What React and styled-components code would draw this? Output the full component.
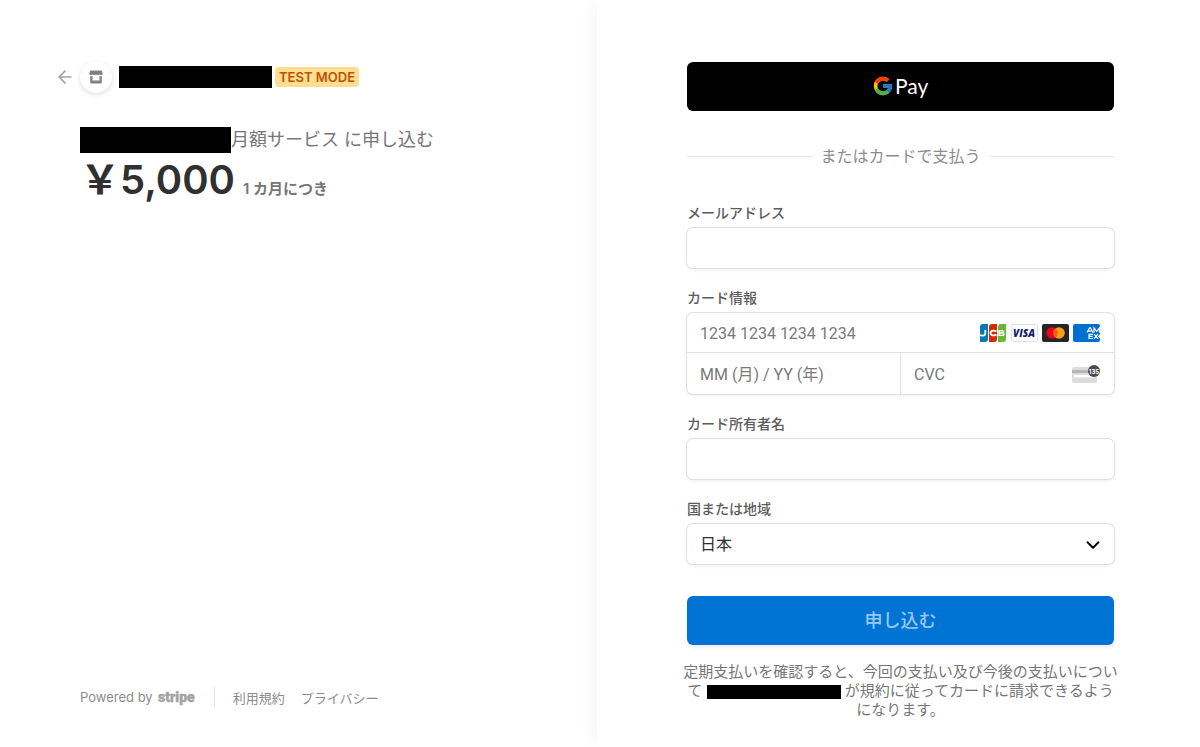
import styled, { createGlobalStyle } from "styled-components";
import { FcGoogle } from "react-icons/fc";
import { ArrowLeft, ChevronDown } from "lucide-react";

const GlobalStyle = createGlobalStyle`
    * {
        box-sizing: border-box;
    }
    body {
        margin: 0;
        background: #ffffff;
        color: #1a1a1a;
        font-family: Inter, "Noto Sans CJK JP", sans-serif;
        -webkit-font-smoothing: antialiased;
    }
    input, select, button {
        font-family: inherit;
    }
`;

const Page = styled.div`
    display: grid;
    grid-template-columns: minmax(0, 597fr) minmax(0, 603fr);
    min-height: 100vh;
`;

const Overview = styled.section`
    display: flex;
    flex-direction: column;
    justify-content: space-between;
    padding: 61px 90px 39px 80px;
`;

const Payment = styled.main`
    padding: 62px 86px 27px 90px;
    box-shadow: -8px 0 16px -4px rgba(0, 0, 0, 0.04);
`;

const Header = styled.header`
    display: flex;
    align-items: center;
    margin-left: -25px;
    height: 32px;
`;

const BackLink = styled.a`
    display: flex;
    width: 25px;
    color: #a3a3a3;
`;

const StoreBadge = styled.div`
    display: flex;
    align-items: center;
    justify-content: center;
    width: 32px;
    height: 32px;
    margin-right: 7px;
    border-radius: 50%;
    background: #ffffff;
    box-shadow: 0 2px 5px rgba(0, 0, 0, 0.12), 0 0 2px rgba(0, 0, 0, 0.04);
`;

const Redacted = styled.span`
    display: inline-block;
    flex: none;
    width: ${(props) => props.$width}px;
    height: ${(props) => props.$height}px;
    background: #000000;
    vertical-align: middle;
`;

const TestMode = styled.span`
    height: 20px;
    margin-left: 3px;
    padding: 0 4px;
    border-radius: 4px;
    background: #ffde92;
    color: #bb5504;
    font-size: 13px;
    font-weight: 600;
    line-height: 20px;
    white-space: nowrap;
`;

const Title = styled.h1`
    display: flex;
    align-items: center;
    height: 26px;
    margin: 34px 0 0;
    color: #767676;
    font-size: 18px;
    font-weight: 400;
    line-height: 26px;
    white-space: nowrap;
`;

const Price = styled.div`
    display: flex;
    align-items: baseline;
    gap: 8px;
    color: #303030;
    font-size: 40px;
    font-weight: 600;
    line-height: 54px;
    white-space: nowrap;

    .interval {
        color: #767676;
        font-size: 15px;
        font-weight: 600;
    }
`;

const Footer = styled.footer`
    display: flex;
    align-items: center;
    height: 22px;
    color: #8c8c8c;
    font-size: 13px;
    white-space: nowrap;

    .powered {
        display: flex;
        align-items: center;
        gap: 5px;
        padding-right: 17px;
        border-right: 1px solid #e3e3e3;
        line-height: 20px;
    }
    nav {
        display: flex;
        gap: 16px;
        padding-left: 18px;
    }
    a {
        color: inherit;
        text-decoration: none;
    }
`;

const PayButton = styled.button`
    display: flex;
    align-items: center;
    justify-content: center;
    width: 100%;
    height: 49px;
    border: 0;
    border-radius: 6px;
    background: #000000;
    cursor: pointer;
`;

const Divider = styled.div`
    display: flex;
    align-items: center;
    gap: 8px;
    margin: 35px 0 37px;
    color: #8c8c8c;
    font-size: 16px;
    line-height: 20px;
    white-space: nowrap;

    &::before,
    &::after {
        content: "";
        flex: 1;
        height: 1px;
        background: #e6e6e6;
    }
`;

const Field = styled.div`
    margin-bottom: 20px;
`;

const Label = styled.label`
    display: block;
    margin-bottom: 5px;
    color: #5c5c5c;
    font-size: 14px;
    font-weight: 500;
    line-height: 20px;
`;

const outline = "0 0 0 1px #e0e0e0, 0 2px 4px rgba(0, 0, 0, 0.07)";

const TextInput = styled.input`
    display: block;
    width: 100%;
    height: 40px;
    padding: 0 13px;
    border: 0;
    border-radius: 6px;
    outline: 0;
    background: #ffffff;
    box-shadow: ${outline};
    font-size: 16px;
`;

const CardGroup = styled.div`
    border-radius: 6px;
    box-shadow: ${outline};
`;

const CardRow = styled.div`
    display: flex;
    border-bottom: ${(props) => (props.$divided ? "1px solid #e0e0e0" : "0")};
`;

const CardCell = styled.div`
    display: flex;
    flex: 1;
    align-items: center;
    min-width: 0;
    height: ${(props) => props.$height}px;
    padding: 0 14px 0 13px;
    border-left: ${(props) => (props.$split ? "1px solid #e0e0e0" : "0")};

    input {
        flex: 1;
        min-width: 0;
        height: 36px;
        padding: 2px 0 0;
        border: 0;
        outline: 0;
        background: transparent;
        font-family: Roboto, "Noto Sans CJK JP", sans-serif;
        font-size: 16px;
    }
    input::placeholder {
        color: #7a7a7a;
    }
`;

const Brands = styled.div`
    display: flex;
    gap: 4px;
`;

const SelectBox = styled.div`
    position: relative;

    select {
        width: 100%;
        height: 40px;
        padding: 0 13px;
        border: 0;
        border-radius: 6px;
        outline: 0;
        appearance: none;
        background: #ffffff;
        box-shadow: ${outline};
        color: #303030;
        font-size: 16px;
    }
    svg {
        position: absolute;
        top: 10px;
        right: 10px;
        pointer-events: none;
    }
`;

const Submit = styled.button`
    display: block;
    width: 100%;
    height: 49px;
    margin-top: 32px;
    padding: 0 0 3px;
    border: 0;
    border-radius: 6px;
    background: #0074d4;
    box-shadow: 0 2px 4px rgba(0, 0, 0, 0.08);
    color: #99c7ee;
    font-size: 18px;
    font-weight: 500;
`;

const Legal = styled.p`
    margin: 17px -10px 0;
    color: #767676;
    font-size: 15px;
    line-height: 19px;
    text-align: center;
    white-space: nowrap;
`;

const StoreIcon = () => (
    <svg width="14" height="14" viewBox="0 0 14 14" fill="#808080">
        <path d="M2 .5h10q1 0 1.200 1l.4 2.300q0 1.400-1.500 1.400-1.300 0-1.700-.9-.4.900-1.700.9T7 4.300q-.4.900-1.700.9t-1.700-.9q-.4.900-1.700.9Q.4 5.200.4 3.800L.8 1.500Q1 .5 2 .5Z" />
        <path d="M1.200 6.300q1.500.2 2.300-.5V10.500h7V5.800q.8.700 2.300.5V12.300q0 1.200-1.200 1.200H2.400q-1.200 0-1.200-1.200Z" />
    </svg>
);

const StripeLogo = () => (
    <svg width="39" height="20" viewBox="0 0 39 20" role="img" aria-label="stripe">
        <text
            x="0"
            y="15"
            fill="#a3a3a3"
            stroke="#a3a3a3"
            strokeWidth="0.4"
            fontFamily="Roboto"
            fontSize="14"
            fontWeight="900"
        >
            stripe
        </text>
    </svg>
);

const GooglePayLogo = () => (
    <svg width="58" height="28" viewBox="0 0 58 28" role="img" aria-label="Google Pay">
        <g transform="translate(0 2)">
            <FcGoogle size={22} />
        </g>
        <text x="23" y="21" fill="#ffffff" fontFamily="Lato" fontSize="21">Pay</text>
    </svg>
);

const Jcb = () => (
    <svg width="27" height="18" viewBox="0 0 27 18">
        <path d="M3 0h5v15q0 3-3 3H0V3q0-3 3-3Z" fill="#047ab1" />
        <path d="M12 0h5v15q0 3-3 3H9V3q0-3 3-3Z" fill="#d42d06" />
        <path d="M21 0h5v15q0 3-3 3h-5V3q0-3 3-3Z" fill="#67b637" />
        <g fill="none" stroke="#ffffff">
            <path d="M0 11q5.300 1.600 5.300-1.500V6" strokeWidth="1.800" />
            <path d="M16.500 7.200Q10.500 5.600 10.500 9t6 1.800" strokeWidth="1.800" />
            <path d="M19 6.700h3.800q1.500 1.100 0 2.300H19h4.200q1.600 1.200 0 2.400H19Z" strokeWidth="1.400" />
        </g>
    </svg>
);

const Visa = () => (
    <svg width="27" height="18" viewBox="0 0 27 18">
        <rect x="0.500" y="0.500" width="26" height="17" rx="2" fill="#ffffff" stroke="#dedede" />
        <text
            x="13"
            y="13"
            textAnchor="middle"
            fill="#171e6c"
            fontFamily="Open Sans"
            fontSize="10"
            fontStyle="italic"
            fontWeight="800"
        >
            VISA
        </text>
    </svg>
);

const Mastercard = () => (
    <svg width="27" height="18" viewBox="0 0 27 18">
        <rect width="27" height="18" rx="2" fill="#252525" />
        <circle cx="10" cy="9" r="5.800" fill="#eb001b" />
        <circle cx="17" cy="9" r="5.800" fill="#f79e1b" />
        <path d="M13.500 4.400a5.800 5.800 0 0 1 0 9.200a5.800 5.800 0 0 1 0-9.200Z" fill="#ff5f00" />
    </svg>
);

const Amex = () => (
    <svg width="27" height="18" viewBox="0 0 27 18">
        <rect width="27" height="18" rx="2" fill="#016fd0" />
        <g fill="none" stroke="#ffffff" strokeWidth="1.200">
            <path d="M14 8.500 16.600 3.800h.8L20 8.500M15.300 7.200h3.400M21 8.500V4l2.800 3.400L26.400 4v4.500" />
            <path d="M20 10.300h-4v4.200h4M16 12.400h3.600M21 10.100l4 4.600M25 10.100l-4 4.600M27 11l-1.200 1.400L27 13.800" />
        </g>
    </svg>
);

const CvcIcon = () => (
    <svg width="28" height="20" viewBox="0 0 28 20">
        <rect x="0" y="3" width="25" height="16" rx="2" fill="#dcdcdc" />
        <path d="M0 6h25v3H0Z" fill="#b5b5b5" />
        <path d="M2 11h19v2.500H2Z" fill="#ffffff" />
        <circle cx="22" cy="7" r="6" fill="#4a4a4a" />
        <text
            x="22"
            y="9.500"
            textAnchor="middle"
            fill="#ffffff"
            fontFamily="Inter"
            fontSize="6"
            fontWeight="700"
        >
            135
        </text>
    </svg>
);

const App = () => {
    return (
        <>
            <GlobalStyle />
            <Page>
                <Overview>
                    <div>
                        <Header>
                            <BackLink href="#" aria-label="戻る">
                                <ArrowLeft size={20} strokeWidth={2} />
                            </BackLink>
                            <StoreBadge>
                                <StoreIcon />
                            </StoreBadge>
                            <Redacted $width={153} $height={22} />
                            <TestMode>TEST MODE</TestMode>
                        </Header>
                        <Title>
                            <Redacted $width={151} $height={26} />
                            月額サービス に申し込む
                        </Title>
                        <Price>
                            <span>￥5,000</span>
                            <span className="interval">1 カ月につき</span>
                        </Price>
                    </div>
                    <Footer>
                        <div className="powered">
                            Powered by
                            <StripeLogo />
                        </div>
                        <nav>
                            <a href="#">利用規約</a>
                            <a href="#">プライバシー</a>
                        </nav>
                    </Footer>
                </Overview>

                <Payment>
                    <PayButton type="button">
                        <GooglePayLogo />
                    </PayButton>
                    <Divider>またはカードで支払う</Divider>
                    <form>
                        <Field>
                            <Label htmlFor="email">メールアドレス</Label>
                            <TextInput id="email" type="email" />
                        </Field>
                        <Field>
                            <Label htmlFor="card-number">カード情報</Label>
                            <CardGroup>
                                <CardRow $divided>
                                    <CardCell $height={39}>
                                        <input id="card-number" placeholder="1234 1234 1234 1234" />
                                        <Brands>
                                            <Jcb />
                                            <Visa />
                                            <Mastercard />
                                            <Amex />
                                        </Brands>
                                    </CardCell>
                                </CardRow>
                                <CardRow>
                                    <CardCell $height={41}>
                                        <input aria-label="有効期限" placeholder="MM (月) / YY (年)" />
                                    </CardCell>
                                    <CardCell $height={41} $split>
                                        <input aria-label="CVC" placeholder="CVC" />
                                        <CvcIcon />
                                    </CardCell>
                                </CardRow>
                            </CardGroup>
                        </Field>
                        <Field>
                            <Label htmlFor="card-name">カード所有者名</Label>
                            <TextInput id="card-name" type="text" />
                        </Field>
                        <Field>
                            <Label htmlFor="country">国または地域</Label>
                            <SelectBox>
                                <select id="country" defaultValue="JP">
                                    <option value="JP">日本</option>
                                </select>
                                <ChevronDown size={22} color="#000000" strokeWidth={2} />
                            </SelectBox>
                        </Field>
                        <Submit type="submit">申し込む</Submit>
                    </form>
                    <Legal>
                        定期支払いを確認すると、今回の支払い及び今後の支払いについ
                        <br />
                        て <Redacted $width={134} $height={14} /> が規約に従ってカードに請求できるよう
                        <br />
                        になります。
                    </Legal>
                </Payment>
            </Page>
        </>
    );
};

export default App;
